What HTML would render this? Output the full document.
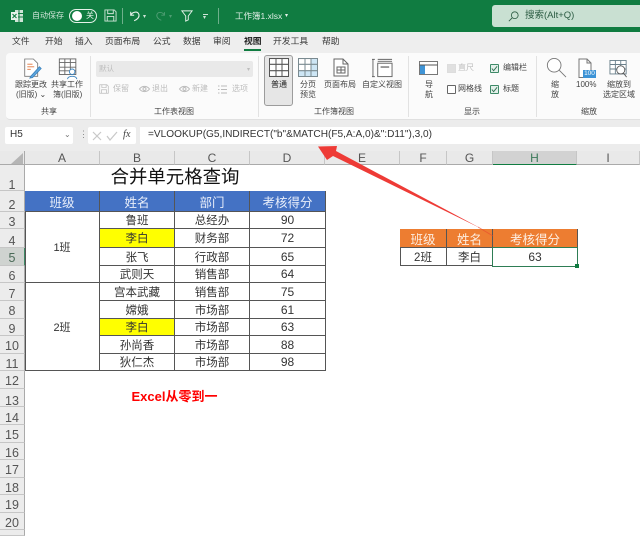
<!DOCTYPE html>
<html><head><meta charset="utf-8">
<style>
html,body{margin:0;padding:0}
body{width:640px;height:536px;overflow:hidden;position:relative;background:#fff;font-family:"Liberation Sans","Noto Sans CJK SC",sans-serif;color:#222}
div{position:absolute;box-sizing:border-box}
.t{white-space:nowrap;line-height:1;transform:translateX(-50%);text-align:center}
.l{white-space:nowrap;line-height:1}
.m{font-size:8px;color:#444}
.tab{font-size:8.8px;color:#3a3a3a;top:37px}
.dis{color:#bdbdbd;font-size:8px}
.ch{top:151px;height:14px;font-size:12px;color:#555;line-height:14px;text-align:center;background:#e9e9e9;border-right:1px solid #c6c6c6;border-bottom:1px solid #aaa}
.rh{left:0;width:25px;background:#ececec;border-right:1px solid #aaa;border-bottom:1px solid #c6c6c6;font-size:12.500px;color:#555;text-align:center}
.c{border-right:1px solid #555;border-bottom:1px solid #555;text-align:center;font-size:11.500px;color:#333;display:flex;align-items:center;justify-content:center;white-space:nowrap}
.n{font-size:12px}
.hb{background:#4472c4;color:#e8eefa;font-size:12.500px}
.ho{background:#ed7d31;color:#fdeee2;font-size:12.500px}
svg{position:absolute;overflow:visible}
</style></head><body>
<!-- title bar -->
<div style="left:0;top:0;width:640px;height:32px;background:#107c41"></div>
<svg style="left:11px;top:9px" width="12" height="14" viewBox="0 0 12 14"><rect x="4" y="1" width="8" height="12" fill="#cfe4d7"/><path d="M4 4.500H12M4 8H12M8 1V13" stroke="#107c41"/><rect x="0" y="3" width="7" height="8" fill="#e8f3ec"/><path d="M1.500 5L5.500 9M5.500 5L1.500 9" stroke="#107c41" stroke-width="1.100"/></svg>
<div class="l" style="left:32px;top:12px;font-size:8px;color:#cfe4d7">自动保存</div>
<div style="left:69px;top:9px;width:28px;height:14px;border:1px solid #e6f2ea;border-radius:7px"></div>
<div style="left:72px;top:11px;width:10px;height:10px;background:#fff;border-radius:50%"></div>
<div class="l" style="left:86px;top:12px;font-size:8px;color:#e6f2ea">关</div>
<svg style="left:104px;top:9px" width="13" height="13" viewBox="0 0 14 14" fill="none" stroke="#cfe4d7"><path d="M1 1H11L13 3V13H1Z"/><path d="M4 1V5H10V1M3.500 13V8H10.500V13"/></svg>
<div style="left:122px;top:8px;width:1px;height:16px;background:#6fb08c"></div>
<svg style="left:129px;top:9px" width="12" height="14" viewBox="0 0 14 14" fill="none" stroke="#e6f2ea" stroke-width="1.300"><path d="M2 2V6H6M2 6C4 2 10 1 11.500 5C12.500 8 10 11 6 12.500"/></svg>
<div class="l" style="left:143px;top:14px;font-size:6px;color:#cfe4d7">▾</div>
<svg style="left:155px;top:10px" width="11" height="12" viewBox="0 0 14 14" fill="none" stroke="#4f9d73" stroke-width="1.200"><path d="M12 2V6H8M12 6C10 2 4 1 2.500 5C1.500 8 4 11 8 12.500"/></svg>
<div class="l" style="left:169px;top:14px;font-size:6px;color:#4f9d73">▾</div>
<svg style="left:181px;top:10px" width="12" height="12" viewBox="0 0 14 14" fill="none" stroke="#e6f2ea" stroke-width="1.100"><path d="M1 1H13L8.500 7V11.500L5.500 13V7Z"/></svg>
<div style="left:203px;top:14px;width:5px;height:1px;background:#cfe4d7"></div>
<div class="l" style="left:203px;top:15px;font-size:6px;color:#cfe4d7;">▾</div>
<div style="left:218px;top:8px;width:1px;height:16px;background:#6fb08c"></div>
<div class="l" style="left:235px;top:12px;font-size:8.500px;color:#e0eee6">工作簿1.xlsx</div>
<div class="l" style="left:285px;top:13px;font-size:6px;color:#e6f2ea">▾</div>
<div style="left:492px;top:5px;width:148px;height:22px;background:#c9e0d2;border-radius:3px 0 0 3px"></div>
<svg style="left:508px;top:11px" width="11" height="11" viewBox="0 0 13 13" fill="none" stroke="#2d5d44" stroke-width="1"><circle cx="8" cy="5" r="4"/><path d="M5 8L1 12"/></svg>
<div class="l" style="left:525px;top:11px;font-size:9.500px;color:#2d5d44">搜索(Alt+Q)</div>
<!-- tabs -->
<div style="left:0;top:32px;width:640px;height:20px;background:#eeeeee"></div>
<div class="l tab" style="left:12px">文件</div>
<div class="l tab" style="left:45px">开始</div>
<div class="l tab" style="left:75px">插入</div>
<div class="l tab" style="left:105px">页面布局</div>
<div class="l tab" style="left:153px">公式</div>
<div class="l tab" style="left:183px">数据</div>
<div class="l tab" style="left:213px">审阅</div>
<div class="l tab" style="left:244px;font-weight:bold;color:#222">视图</div>
<div style="left:244px;top:49px;width:17px;height:2px;background:#107c41"></div>
<div class="l tab" style="left:273px">开发工具</div>
<div class="l tab" style="left:322px">帮助</div>
<!-- ribbon -->
<div style="left:0;top:52px;width:640px;height:70px;background:#eeeeee"></div>
<div style="left:6px;top:53px;width:634px;height:67px;background:#fbfbfb;border-radius:4px 0 0 4px;border-bottom:1px solid #e0e0e0"></div>
<div style="left:90px;top:56px;width:1px;height:61px;background:#e2e2e2"></div>
<div style="left:258px;top:56px;width:1px;height:61px;background:#e2e2e2"></div>
<div style="left:408px;top:56px;width:1px;height:61px;background:#e2e2e2"></div>
<div style="left:536px;top:56px;width:1px;height:61px;background:#e2e2e2"></div>
<!-- share group -->
<svg style="left:23px;top:58px" width="19" height="21" viewBox="0 0 22 24" fill="none"><path d="M2 1H12L17 6V21H2Z" fill="#fff" stroke="#777"/><path d="M5 7H11M5 10H13M5 13H9" stroke="#e0733a"/><path d="M9 21L19 10L21 12L11 22.500L8 23Z" fill="#5ea7de" stroke="#3d85c0"/></svg>
<div class="l m" style="left:15px;top:81px">跟踪更改</div>
<div class="l m" style="left:16px;top:91px">(旧版) ⌄</div>
<svg style="left:58px;top:58px" width="21" height="22" viewBox="0 0 22 24" fill="none" stroke="#666"><rect x="1" y="1" width="18" height="17" fill="#fff"/><path d="M1 5H19M1 10H19M1 14H19M7 1V18M13 1V18"/><circle cx="15" cy="15" r="3" fill="#fff" stroke="#3d85c0"/><path d="M10 23C10 19 20 19 20 23" stroke="#3d85c0" fill="#fff"/></svg>
<div class="l m" style="left:51px;top:81px">共享工作</div>
<div class="l m" style="left:53px;top:91px">簿(旧版)</div>
<div class="l m" style="left:41px;top:108px">共享</div>
<!-- sheet view group -->
<div style="left:96px;top:61px;width:157px;height:16px;background:#e9e9e9;border-radius:2px"></div>
<div class="l dis" style="left:99px;top:65px;font-size:7.500px">默认</div>
<div class="l dis" style="left:247px;top:67px;font-size:6px">▾</div>
<svg style="left:99px;top:84px" width="10" height="10" viewBox="0 0 14 14" fill="none" stroke="#bbb"><path d="M1 1H11L13 3V13H1Z"/><path d="M4 1V5H10V1M3.500 13V8H10.500V13"/></svg>
<div class="l dis" style="left:113px;top:85px">保留</div>
<svg style="left:139px;top:85px" width="11" height="8" viewBox="0 0 11 8" fill="none" stroke="#bbb"><path d="M.5 4C3 .5 8 .5 10.500 4C8 7.500 3 7.500 .5 4Z"/><circle cx="5.500" cy="4" r="1.500"/></svg>
<div class="l dis" style="left:152px;top:85px">退出</div>
<svg style="left:179px;top:85px" width="11" height="8" viewBox="0 0 11 8" fill="none" stroke="#bbb"><path d="M.5 4C3 .5 8 .5 10.500 4C8 7.500 3 7.500 .5 4Z"/><circle cx="5.500" cy="4" r="1.500"/></svg>
<div class="l dis" style="left:192px;top:85px">新建</div>
<svg style="left:218px;top:85px" width="9" height="9" viewBox="0 0 9 9" stroke="#bbb"><path d="M3 1H9M3 4.500H9M3 8H9M0 1H1.500M0 4.500H1.500M0 8H1.500"/></svg>
<div class="l dis" style="left:232px;top:85px">选项</div>
<div class="l m" style="left:154px;top:108px">工作表视图</div>
<!-- workbook views -->
<div style="left:264px;top:55px;width:29px;height:51px;background:#e6e6e6;border:1px solid #9c9c9c;border-radius:3px"></div>
<svg style="left:269px;top:58px" width="20" height="19" viewBox="0 0 20 18" fill="#fff" stroke="#555" preserveAspectRatio="none"><rect x=".5" y=".5" width="19" height="17"/><path d="M.5 6H19.500M.5 12H19.500M7 .5V17.500M13 .5V17.500" fill="none"/></svg>
<div class="l m" style="left:271px;top:81px;color:#222">普通</div>
<svg style="left:298px;top:58px" width="20" height="19" viewBox="0 0 20 18" fill="#fff" stroke="#7a8a90" preserveAspectRatio="none"><rect x=".5" y=".5" width="19" height="17"/><rect x="13" y="1" width="6" height="16" fill="#cde6f5" stroke="none"/><rect x="1" y="12" width="18" height="5" fill="#cde6f5" stroke="none"/><path d="M.5 6H19.500M.5 12H19.500M7 .5V17.500M13 .5V17.500" fill="none"/></svg>
<div class="l m" style="left:300px;top:81px">分页</div>
<div class="l m" style="left:300px;top:91px">预览</div>
<svg style="left:333px;top:58px" width="16" height="19" viewBox="0 0 16 19" fill="#fff" stroke="#666"><path d="M1 1H10L15 6V18H1Z"/><path d="M10 1V6H15" fill="none"/><rect x="4" y="9" width="8" height="6"/><path d="M4 12H12M8 9V15" fill="none"/></svg>
<div class="l m" style="left:324px;top:81px">页面布局</div>
<svg style="left:372px;top:58px" width="21" height="20" viewBox="0 0 22 20" fill="none" stroke="#666"><path d="M1 1V19M0 1H3M0 19H3M6 1H21M6 3H21"/><rect x="6" y="5" width="15" height="14" fill="#fff"/><rect x="9" y="8" width="9" height="2" fill="#999" stroke="none"/></svg>
<div class="l m" style="left:362px;top:81px">自定义视图</div>
<div class="l m" style="left:314px;top:108px">工作簿视图</div>
<!-- show -->
<svg style="left:419px;top:61px" width="19" height="14" viewBox="0 0 19 14" fill="#fff" stroke="#777"><rect x=".5" y=".5" width="18" height="13"/><rect x="1" y="4" width="5" height="9" fill="#3f94d6" stroke="none"/><path d="M.5 4H18.500" fill="none" stroke="#555"/></svg>
<div class="l m" style="left:425px;top:81px">导</div>
<div class="l m" style="left:425px;top:91px">航</div>
<div style="left:447px;top:64px;width:9px;height:9px;background:#e0e0e0;border:1px solid #ddd"></div>
<div class="l dis" style="left:458px;top:64px">直尺</div>
<div style="left:447px;top:85px;width:9px;height:9px;background:#fff;border:1px solid #666;border-radius:1px"></div>
<div class="l m" style="left:458px;top:85px">网格线</div>
<div style="left:490px;top:64px;width:9px;height:9px;background:#e3f0ea;border:1px solid #3e8a68;border-radius:1px"></div>
<svg style="left:491px;top:65px" width="7" height="7" viewBox="0 0 8 8" fill="none" stroke="#2e6e50"><path d="M1 4L3 6.500L7 1.500"/></svg>
<div class="l m" style="left:503px;top:64px">编辑栏</div>
<div style="left:490px;top:85px;width:9px;height:9px;background:#e3f0ea;border:1px solid #3e8a68;border-radius:1px"></div>
<svg style="left:491px;top:86px" width="7" height="7" viewBox="0 0 8 8" fill="none" stroke="#2e6e50"><path d="M1 4L3 6.500L7 1.500"/></svg>
<div class="l m" style="left:503px;top:85px">标题</div>
<div class="l m" style="left:464px;top:108px">显示</div>
<!-- zoom -->
<svg style="left:546px;top:57px" width="20" height="21" viewBox="0 0 22 23" fill="none" stroke="#777"><circle cx="9" cy="9" r="7.500" fill="#fff"/><path d="M14.500 14.500L22 22"/></svg>
<div class="l m" style="left:551px;top:81px">缩</div>
<div class="l m" style="left:551px;top:91px">放</div>
<svg style="left:578px;top:58px" width="14" height="20" viewBox="0 0 14 20" fill="#fff" stroke="#777"><path d="M1 1H9L13 5V19.500H1Z"/><path d="M9 1V5H13" fill="none"/></svg>
<div style="left:583px;top:70px;width:13px;height:8px;background:#3c93d6;color:#fff;font-size:6.500px;line-height:8px;text-align:center">100</div>
<div class="l m" style="left:576px;top:81px">100%</div>
<svg style="left:609px;top:60px" width="19" height="18" viewBox="0 0 20 20" fill="none" stroke="#6a7f8a"><rect x=".5" y=".5" width="18" height="15" fill="#fff"/><path d="M.5 5H18.500M.5 10H18.500M6.500 .5V15.500M12.500 .5V15.500"/><circle cx="12.500" cy="11" r="4.500" fill="#fff" stroke="#555"/><path d="M15.500 14.500L19 19" stroke="#555"/></svg>
<div class="l m" style="left:607px;top:81px">缩放到</div>
<div class="l m" style="left:603px;top:91px">选定区域</div>
<div class="l m" style="left:581px;top:108px">缩放</div>
<!-- formula bar -->
<div style="left:0;top:120px;width:640px;height:31px;background:#ececec"></div>
<div style="left:5px;top:127px;width:68px;height:17px;background:#fff;border-radius:2px"></div>
<div class="l" style="left:10px;top:130px;font-size:10px;color:#333">H5</div>
<div class="l" style="left:64px;top:131px;font-size:8px;color:#777">⌄</div>
<div class="l" style="left:79px;top:130px;font-size:9px;color:#888">⋮</div>
<div style="left:88px;top:127px;width:48px;height:17px;background:#fff;border-radius:2px"></div>
<svg style="left:92px;top:131px" width="26" height="10" viewBox="0 0 26 10" fill="none" stroke="#c8c8c8" stroke-width="1.200"><path d="M1 1L9 9M9 1L1 9M15 5L18 9L25 1"/></svg>
<div class="l" style="left:123px;top:130px;font-size:10.500px;font-style:italic;font-family:'Liberation Serif',serif;color:#444">fx</div>
<div style="left:140px;top:127px;width:500px;height:17px;background:#fff"></div>
<div class="l" style="left:148px;top:130px;font-size:10.100px;color:#333;font-family:'Liberation Sans',sans-serif">=VLOOKUP(G5,INDIRECT("b"&amp;MATCH(F5,A:A,0)&amp;":D11"),3,0)</div>
<!-- column headers -->
<div style="left:0;top:151px;width:25px;height:14px;background:#e9e9e9;border-right:1px solid #aaa;border-bottom:1px solid #aaa"></div>
<svg style="left:11px;top:153px" width="12" height="11"><path d="M12 0V11H0Z" fill="#b5b5b5"/></svg>
<div class="ch" style="left:25px;width:75px">A</div>
<div class="ch" style="left:100px;width:75px">B</div>
<div class="ch" style="left:175px;width:75px">C</div>
<div class="ch" style="left:250px;width:75px">D</div>
<div class="ch" style="left:325px;width:75px">E</div>
<div class="ch" style="left:400px;width:47px">F</div>
<div class="ch" style="left:447px;width:46px">G</div>
<div class="ch" style="left:493px;width:84px;background:#d2d2d2;color:#3c7a5a;border-bottom:1px solid #107c41">H</div>
<div class="ch" style="left:577px;width:63px">I</div>
<!-- row headers -->
<div class="rh" style="top:165px;height:26px;line-height:40px">1</div>
<div class="rh" style="top:191px;height:21px;line-height:28px">2</div>
<div class="rh" style="top:212px;height:17px;line-height:20px">3</div>
<div class="rh" style="top:229px;height:19px;line-height:25px">4</div>
<div class="rh" style="top:248px;height:18px;line-height:21px;background:#cfd3d0;color:#4a6a58;border-right:1px solid #3f8a65">5</div>
<div class="rh" style="top:266px;height:17px;line-height:21px">6</div>
<div class="rh" style="top:283px;height:18px;line-height:22px">7</div>
<div class="rh" style="top:301px;height:18px;line-height:21px">8</div>
<div class="rh" style="top:319px;height:17px;line-height:20px">9</div>
<div class="rh" style="top:336px;height:18px;line-height:21px">10</div>
<div class="rh" style="top:354px;height:17px;line-height:20px">11</div>
<div class="rh" style="top:371px;height:18px;line-height:21px">12</div>
<div class="rh" style="top:389px;height:18px;line-height:24px">13</div>
<div class="rh" style="top:407px;height:18px;line-height:22px">14</div>
<div class="rh" style="top:425px;height:18px;line-height:21px">15</div>
<div class="rh" style="top:443px;height:17px;line-height:20px">16</div>
<div class="rh" style="top:460px;height:18px;line-height:21px">17</div>
<div class="rh" style="top:478px;height:17px;line-height:20px">18</div>
<div class="rh" style="top:495px;height:18px;line-height:21px">19</div>
<div class="rh" style="top:513px;height:17px;line-height:20px">20</div>
<div class="rh" style="top:530px;height:6px"></div>
<!-- title -->
<div class="t" style="left:175px;top:168px;font-size:18.400px;color:#111">合并单元格查询</div>
<!-- table -->
<div style="left:25px;top:191px;width:1px;height:180px;background:#555"></div>
<div style="left:25px;top:191px;width:301px;height:1px;background:#555"></div>
<div class="c hb" style="left:25px;top:191px;width:75px;height:21px">班级</div>
<div class="c hb" style="left:100px;top:191px;width:75px;height:21px">姓名</div>
<div class="c hb" style="left:175px;top:191px;width:75px;height:21px">部门</div>
<div class="c hb" style="left:250px;top:191px;width:76px;height:21px">考核得分</div>
<div class="c" style="left:25px;top:212px;width:75px;height:71px;font-size:11px">1班</div>
<div class="c" style="left:25px;top:283px;width:75px;height:88px;font-size:11px">2班</div>
<div class="c" style="left:100px;top:212px;width:75px;height:17px">鲁班</div><div class="c" style="left:175px;top:212px;width:75px;height:17px">总经办</div><div class="c n" style="left:250px;top:212px;width:76px;height:17px">90</div>
<div class="c" style="left:100px;top:229px;width:75px;height:19px;background:#ffff00">李白</div><div class="c" style="left:175px;top:229px;width:75px;height:19px">财务部</div><div class="c n" style="left:250px;top:229px;width:76px;height:19px">72</div>
<div class="c" style="left:100px;top:248px;width:75px;height:18px">张飞</div><div class="c" style="left:175px;top:248px;width:75px;height:18px">行政部</div><div class="c n" style="left:250px;top:248px;width:76px;height:18px">65</div>
<div class="c" style="left:100px;top:266px;width:75px;height:17px">武则天</div><div class="c" style="left:175px;top:266px;width:75px;height:17px">销售部</div><div class="c n" style="left:250px;top:266px;width:76px;height:17px">64</div>
<div class="c" style="left:100px;top:283px;width:75px;height:18px">宫本武藏</div><div class="c" style="left:175px;top:283px;width:75px;height:18px">销售部</div><div class="c n" style="left:250px;top:283px;width:76px;height:18px">75</div>
<div class="c" style="left:100px;top:301px;width:75px;height:18px">嫦娥</div><div class="c" style="left:175px;top:301px;width:75px;height:18px">市场部</div><div class="c n" style="left:250px;top:301px;width:76px;height:18px">61</div>
<div class="c" style="left:100px;top:319px;width:75px;height:17px;background:#ffff00">李白</div><div class="c" style="left:175px;top:319px;width:75px;height:17px">市场部</div><div class="c n" style="left:250px;top:319px;width:76px;height:17px">63</div>
<div class="c" style="left:100px;top:336px;width:75px;height:18px">孙尚香</div><div class="c" style="left:175px;top:336px;width:75px;height:18px">市场部</div><div class="c n" style="left:250px;top:336px;width:76px;height:18px">88</div>
<div class="c" style="left:100px;top:354px;width:75px;height:17px">狄仁杰</div><div class="c" style="left:175px;top:354px;width:75px;height:17px">市场部</div><div class="c n" style="left:250px;top:354px;width:76px;height:17px">98</div>
<!-- lookup table -->
<div style="left:400px;top:229px;width:1px;height:37px;background:#555"></div>
<div style="left:400px;top:229px;width:178px;height:1px;background:#555"></div>
<div class="c ho" style="left:400px;top:229px;width:47px;height:19px">班级</div>
<div class="c ho" style="left:447px;top:229px;width:46px;height:19px">姓名</div>
<div class="c ho" style="left:493px;top:229px;width:85px;height:19px">考核得分</div>
<div class="c" style="left:400px;top:248px;width:47px;height:18px">2班</div>
<div class="c" style="left:447px;top:248px;width:46px;height:18px">李白</div>
<div class="c n" style="left:493px;top:248px;width:84px;height:18px;border:none">63</div>
<div style="left:492px;top:247px;width:86px;height:19.500px;border:1.500px solid #2e7d55"></div>
<div style="left:575px;top:264px;width:4px;height:4px;background:#107c41"></div>
<!-- red text -->
<div class="t" style="left:174.500px;top:390px;font-size:13px;font-weight:bold;color:#f00">Excel从零到一</div>
<!-- arrow -->
<svg style="left:0;top:0" width="640" height="536"><path d="M318 146.500L337 146L336 151L482 229L333 156L327 160Z" fill="#ee3b36"/><path d="M478 227L493 236" stroke="#e8452f" stroke-width="1" opacity=".6"/></svg>
</body></html>
